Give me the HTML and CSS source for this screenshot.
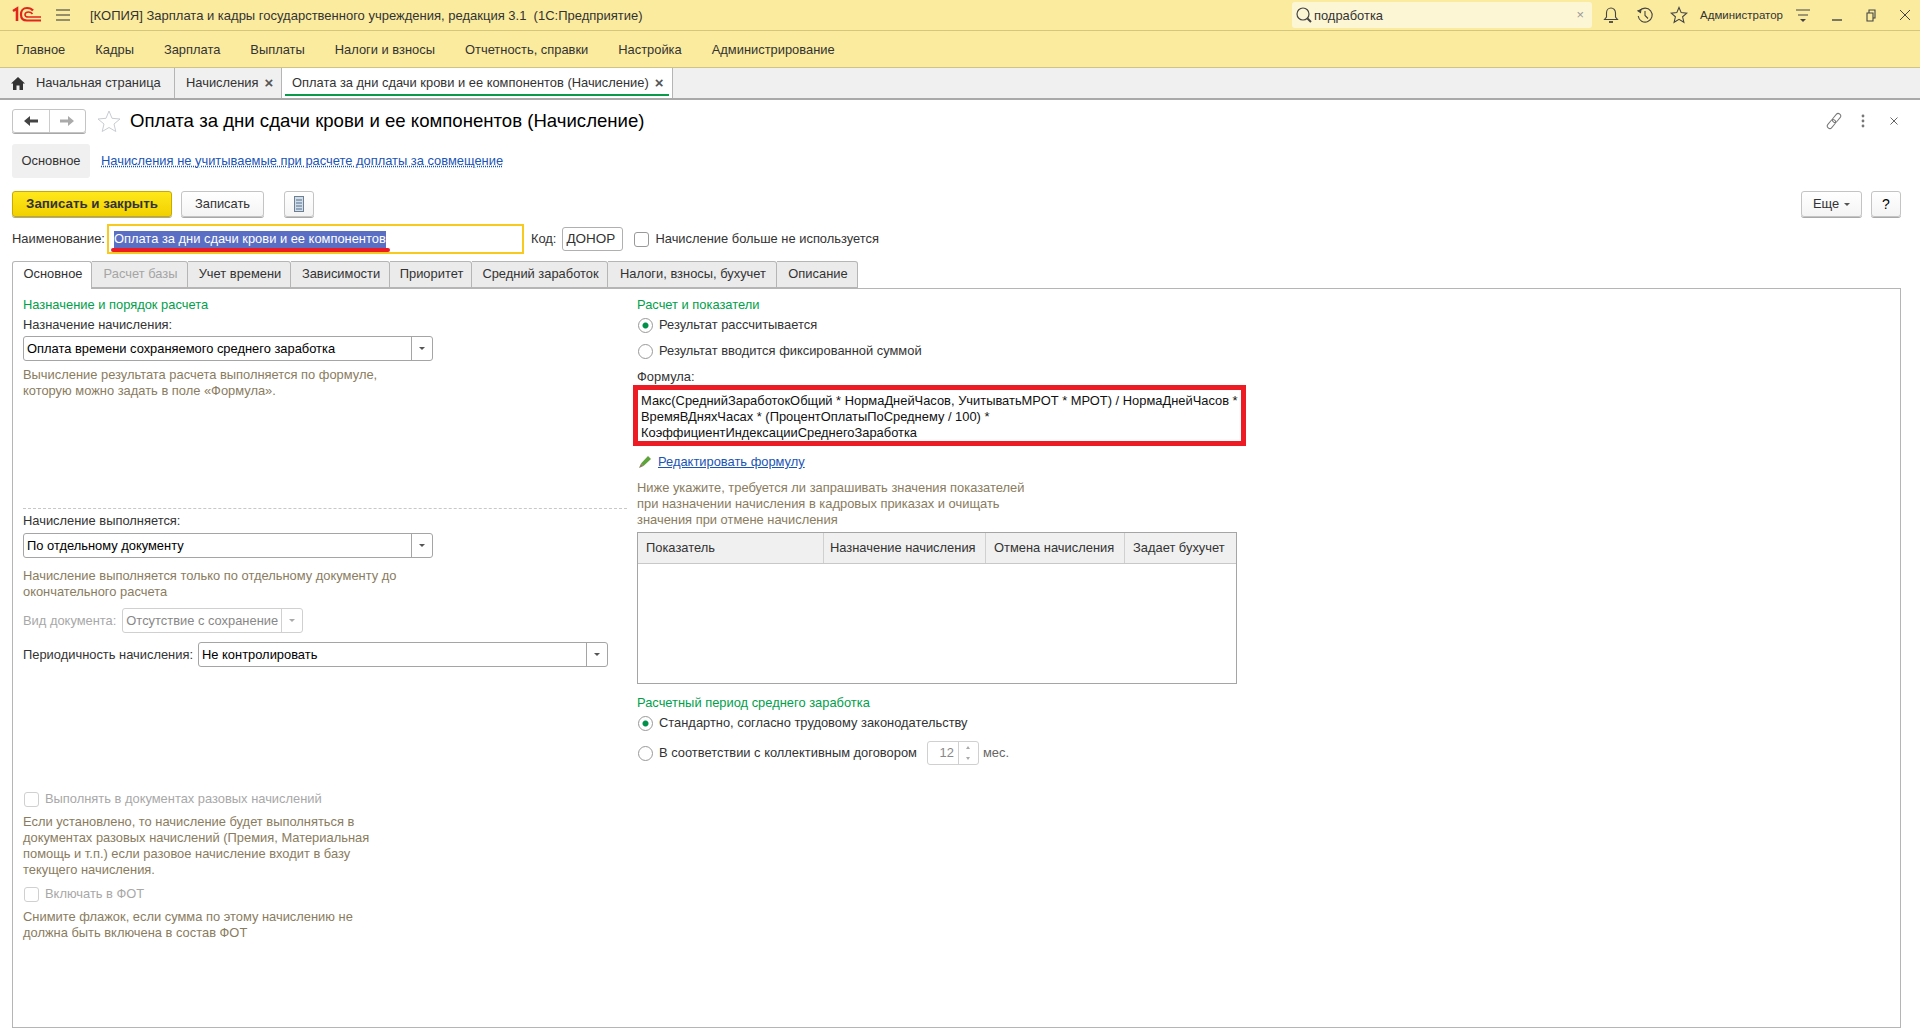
FILE: index.html
```html
<!DOCTYPE html>
<html lang="ru">
<head>
    <meta charset="UTF-8">
    <meta name="viewport" content="width=device-width, initial-scale=1.0">
    <title>Оплата за дни сдачи крови и ее компонентов</title>
    <link rel="stylesheet" href="styles.css">
</head>
<body>
    <div class="titlebar">
        <svg class="logo" width="30" height="18" viewBox="0 0 30 18" fill="none" stroke="#e1251b">
            <path d="M1 5 L5 2.5 V15" stroke-width="2.6"/>
            <path d="M21 4.5 C19.5 2.5 17 2 15 2 C11 2 9 5 9 8.5 C9 12 11 14.5 15 14.5 H29" stroke-width="2.2"/>
            <path d="M20.5 8 C19.5 6.5 18 6 16.5 6 C14 6 13 7.5 13 8.7 C13 10 14 11 16.5 11 H29" stroke-width="1.6"/>
        </svg>
        <svg class="burger" width="16" height="14" viewBox="0 0 16 14" stroke="#333" stroke-width="1.2">
            <path d="M1 2 H15 M1 7 H15 M1 12 H15"/>
        </svg>
        <div class="app-title">[КОПИЯ] Зарплата и кадры государственного учреждения, редакция 3.1&nbsp; (1С:Предприятие)</div>
        <div class="search">
            <svg width="18" height="18" viewBox="0 0 18 18" fill="none" stroke="#444" stroke-width="1.2">
                <circle cx="8" cy="8" r="6"/>
                <path d="M12.5 12.5 L16 16" stroke-width="2"/>
            </svg>
            <span class="search-text">подработка</span>
            <span class="search-x">×</span>
        </div>
        <div class="top-icons">
            <svg width="18" height="18" viewBox="0 0 18 18" fill="none" stroke="#444" stroke-width="1.1">
                <path d="M2.5 13.5 H15.5 L13.5 11 V7 C13.5 4 11.5 2 9 2 C6.5 2 4.5 4 4.5 7 V11 Z"/>
                <path d="M7 16 H11" stroke-width="1.8"/>
            </svg>
            <svg width="18" height="18" viewBox="0 0 18 18" fill="none" stroke="#444" stroke-width="1.1">
                <path d="M3.5 5 A7 7 0 1 1 2.2 10"/>
                <path d="M1.5 4.5 L4.5 6.5 L5 3" fill="#444"/>
                <path d="M9 5 V9.5 L12 12.5"/>
            </svg>
            <svg width="18" height="18" viewBox="0 0 18 18" fill="none" stroke="#444" stroke-width="1.1">
                <path d="M9 1.5 L11.2 6.6 L16.8 7.1 L12.6 10.8 L13.9 16.3 L9 13.4 L4.1 16.3 L5.4 10.8 L1.2 7.1 L6.8 6.6 Z"/>
            </svg>
        </div>
        <div class="user">Администратор</div>
        <div class="win-icons">
            <svg width="16" height="16" viewBox="0 0 16 16" fill="none" stroke="#444" stroke-width="1.1">
                <path d="M1 3 H15 M3 8 H13"/>
                <path d="M5 12 H11 L8 15 Z" fill="#444" stroke="none"/>
            </svg>
            <svg width="16" height="16" viewBox="0 0 16 16" fill="none" stroke="#444" stroke-width="1.4">
                <path d="M3 13 H13"/>
            </svg>
            <svg width="16" height="16" viewBox="0 0 16 16" fill="none" stroke="#444" stroke-width="1.1">
                <path d="M4 6 H10 V14 H4 Z M6 6 V3 H12 V11 H10"/>
            </svg>
            <svg width="16" height="16" viewBox="0 0 16 16" fill="none" stroke="#444" stroke-width="1">
                <path d="M3 3 L13 13 M13 3 L3 13"/>
            </svg>
        </div>
    </div>

    <div class="menubar">
        <span>Главное</span>
        <span>Кадры</span>
        <span>Зарплата</span>
        <span>Выплаты</span>
        <span>Налоги и взносы</span>
        <span>Отчетность, справки</span>
        <span>Настройка</span>
        <span>Администрирование</span>
    </div>

    <div class="tabbar">
        <div class="tab tab-home">
            <svg width="14" height="13" viewBox="0 0 14 13" fill="#333">
                <path d="M7 0 L14 6.5 H12 V13 H8.5 V8.5 H5.5 V13 H2 V6.5 H0 Z"/>
            </svg>
            Начальная страница
        </div>
        <div class="tab tab-list">Начисления <span class="tab-x">×</span></div>
        <div class="tab tab-active">
            <div class="tab-active-inner">Оплата за дни сдачи крови и ее компонентов (Начисление)<span class="tab-x">×</span></div>
        </div>
    </div>

    <div class="form">
        <div class="form-head">
            <div class="nav-group">
                <div class="nav-btn">
                    <svg width="14" height="12" viewBox="0 0 14 12" fill="#444"><path d="M0 6 L6 1 V4.5 H14 V7.5 H6 V11 Z"/></svg>
                </div>
                <div class="nav-btn">
                    <svg width="14" height="12" viewBox="0 0 14 12" fill="#aaa"><path d="M14 6 L8 1 V4.5 H0 V7.5 H8 V11 Z"/></svg>
                </div>
            </div>
            <svg class="fav" width="24" height="22" viewBox="0 0 24 22" fill="none" stroke="#c8ccd0" stroke-width="1">
                <path d="M12 1 L15 8.3 L23 9 L17 14 L18.8 21.5 L12 17.5 L5.2 21.5 L7 14 L1 9 L9 8.3 Z"/>
            </svg>
            <h1 class="form-title">Оплата за дни сдачи крови и ее компонентов (Начисление)</h1>
            <div class="head-tools">
                <svg width="18" height="18" viewBox="0 0 18 18" fill="none" stroke="#777" stroke-width="1">
                    <g transform="rotate(-50 9 9)">
                        <rect x="0" y="6.5" width="10" height="5" rx="2.5"/>
                        <rect x="8" y="6.5" width="10" height="5" rx="2.5"/>
                    </g>
                </svg>
                <svg width="6" height="14" viewBox="0 0 6 14" fill="#777">
                    <circle cx="3" cy="2" r="1.4"/><circle cx="3" cy="7" r="1.4"/><circle cx="3" cy="12" r="1.4"/>
                </svg>
                <svg class="head-close" width="10" height="10" viewBox="0 0 10 10" stroke="#666" stroke-width="1">
                    <path d="M1.5 1.5 L8.5 8.5 M8.5 1.5 L1.5 8.5"/>
                </svg>
            </div>
        </div>

        <div class="sections">
            <div class="section-btn">Основное</div>
            <a class="section-link">Начисления не учитываемые при расчете доплаты за совмещение</a>
        </div>

        <div class="commands">
            <div class="btn btn-primary">Записать и закрыть</div>
            <div class="btn btn-save">Записать</div>
            <div class="btn btn-icon">
                <svg width="10" height="16" viewBox="0 0 10 16">
                    <rect x="0.5" y="0.5" width="9" height="15" fill="#d4dce6" stroke="#6b7f95"/>
                    <path d="M2 4 H8 M2 7 H8 M2 10 H8 M2 13 H8" stroke="#4f6f92" stroke-width="1.2"/>
                </svg>
            </div>
            <div class="commands-right">
                <div class="btn btn-more">Еще <span class="caret"></span></div>
                <div class="btn btn-help">?</div>
            </div>
        </div>

        <div class="name-row">
            <label>Наименование:</label>
            <div class="name-field">
                <span class="selected">Оплата за дни сдачи крови и ее компонентов</span>
                <span class="red-mark"></span>
            </div>
            <label class="code-label">Код:</label>
            <div class="code-field">ДОНОР</div>
            <span class="check"></span>
            <span class="check-text">Начисление больше не используется</span>
        </div>

        <div class="tabs">
            <div class="ftab ftab-active">Основное</div>
            <div class="ftab ftab-off w-base">Расчет базы</div>
            <div class="ftab w-time">Учет времени</div>
            <div class="ftab w-dep">Зависимости</div>
            <div class="ftab w-prio">Приоритет</div>
            <div class="ftab w-avg">Средний заработок</div>
            <div class="ftab w-tax">Налоги, взносы, бухучет</div>
            <div class="ftab w-desc">Описание</div>
        </div>

        <div class="panel">
            <div class="col-left">
                <div class="group-title">Назначение и порядок расчета</div>
                <div class="label mt4">Назначение начисления:</div>
                <div class="select select-wide mt3">
                    <span class="select-value">Оплата времени сохраняемого среднего заработка</span>
                    <span class="select-btn"><span class="caret"></span></span>
                </div>
                <div class="hint hint-first">Вычисление результата расчета выполняется по формуле,<br>которую можно задать в поле «Формула».</div>
                <div class="dashed"></div>
                <div class="label mt4">Начисление выполняется:</div>
                <div class="select select-wide mt4">
                    <span class="select-value">По отдельному документу</span>
                    <span class="select-btn"><span class="caret"></span></span>
                </div>
                <div class="hint hint-second">Начисление выполняется только по отдельному документу до<br>окончательного расчета</div>
                <div class="field-row row-doc">
                    <span class="label-off">Вид документа:</span>
                    <div class="select select-doc">
                        <span class="select-value">Отсутствие с сохранение</span>
                        <span class="select-btn"><span class="caret"></span></span>
                    </div>
                </div>
                <div class="field-row row-period">
                    <span class="label">Периодичность начисления:</span>
                    <div class="select select-period">
                        <span class="select-value">Не контролировать</span>
                        <span class="select-btn"><span class="caret"></span></span>
                    </div>
                </div>
                <div class="check-row row-once">
                    <span class="check check-off"></span>
                    <span class="label-off">Выполнять в документах разовых начислений</span>
                </div>
                <div class="hint hint-once">Если установлено, то начисление будет выполняться в<br>документах разовых начислений (Премия, Материальная<br>помощь и т.п.) если разовое начисление входит в базу<br>текущего начисления.</div>
                <div class="check-row row-fot">
                    <span class="check check-off"></span>
                    <span class="label-off">Включать в ФОТ</span>
                </div>
                <div class="hint hint-fot">Снимите флажок, если сумма по этому начислению не<br>должна быть включена в состав ФОТ</div>
            </div>

            <div class="col-right">
                <div class="group-title">Расчет и показатели</div>
                <div class="radio-row mt4"><span class="radio radio-on"></span>Результат рассчитывается</div>
                <div class="radio-row mt10"><span class="radio"></span>Результат вводится фиксированной суммой</div>
                <div class="label mt10">Формула:</div>
                <div class="formula">Макс(СреднийЗаработокОбщий * НормаДнейЧасов, УчитыватьМРОТ * МРОТ) / НормаДнейЧасов *<br>ВремяВДняхЧасах * (ПроцентОплатыПоСреднему / 100) *<br>КоэффициентИндексацииСреднегоЗаработка</div>
                <div class="edit-row">
                    <svg width="14" height="14" viewBox="0 0 14 14">
                        <path d="M3 8.5 L10 1 L13 4 L5.5 11 Z" fill="#5da33a"/>
                        <path d="M3 8.5 L5.5 11 L1 13 Z" fill="#8a7a5a"/>
                    </svg>
                    <a class="edit-link">Редактировать формулу</a>
                </div>
                <div class="hint hint-table">Ниже укажите, требуется ли запрашивать значения показателей<br>при назначении начисления в кадровых приказах и очищать<br>значения при отмене начисления</div>
                <div class="table">
                    <div class="table-head">
                        <div class="th th-name">Показатель</div>
                        <div class="th th-set">Назначение начисления</div>
                        <div class="th th-cancel">Отмена начисления</div>
                        <div class="th th-acc">Задает бухучет</div>
                    </div>
                </div>
                <div class="group-title mt11">Расчетный период среднего заработка</div>
                <div class="radio-row mt4"><span class="radio radio-on"></span>Стандартно, согласно трудовому законодательству</div>
                <div class="radio-row row-spin">
                    <span class="radio"></span>В соответствии с коллективным договором
                    <div class="spin">
                        <span class="spin-value">12</span>
                        <span class="spin-btns">
                            <span class="spin-up"></span>
                            <span class="spin-down"></span>
                        </span>
                    </div>
                    <span class="spin-unit">мес.</span>
                </div>
            </div>
        </div>
    </div>
</body>
</html>
```

FILE: styles.css
```css
* {
    box-sizing: border-box;
}
body {
    margin: 0;
    width: 1920px;
    height: 1036px;
    overflow: hidden;
    background-color: #ffffff;
    color: #333333;
    font-family: "Liberation Sans", Arial, sans-serif;
    font-size: 12.9px;
    line-height: 16px;
}

/* top bars */
.titlebar {
    height: 31px;
    display: flex;
    align-items: center;
    background-color: #fbeb9e;
    border-bottom: 1px solid #d6c67c;
}
.logo {
    margin-left: 12px;
}
.burger {
    margin-left: 13px;
}
.app-title {
    margin-left: 19px;
    padding-top: 2px;
    width: 1202px;
    font-size: 13px;
    white-space: nowrap;
}
.search {
    width: 300px;
    height: 26px;
    display: flex;
    align-items: center;
    padding-left: 3px;
    background-color: #fdf6d5;
    border-radius: 3px;
}
.search-text {
    margin-left: 1px;
    padding-top: 2px;
    color: #333333;
}
.search-x {
    margin-left: auto;
    margin-right: 8px;
    color: #999999;
}
.top-icons {
    display: flex;
    gap: 16px;
    margin-left: 10px;
}
.user {
    margin-left: 12px;
    width: 92px;
    font-size: 11.5px;
    white-space: nowrap;
}
.win-icons {
    display: flex;
    gap: 18px;
    margin-left: 3px;
}
.menubar {
    height: 37px;
    display: flex;
    align-items: center;
    gap: 30px;
    padding: 2px 0 0 16px;
    background-color: #fbeb9e;
    border-bottom: 1px solid #cfc388;
}
.tabbar {
    height: 32px;
    display: flex;
    background-color: #f0f0f0;
    border-bottom: 2px solid #a9a9a9;
}
.tab {
    display: flex;
    align-items: center;
    white-space: nowrap;
    border-right: 1px solid #b5b5b5;
}
.tab-home {
    width: 175px;
    padding-left: 11px;
    gap: 11px;
}
.tab-list {
    width: 107px;
    padding-left: 11px;
}
.tab-active {
    width: 391px;
    padding: 0 3px 2px;
    background-color: #ffffff;
}
.tab-active-inner {
    flex: 1;
    height: 100%;
    display: flex;
    align-items: center;
    padding: 4px 0 0 7px;
    border-bottom: 2px solid #0a9a4a;
}
.tab-x {
    margin-left: 6px;
    color: #555555;
    font-size: 15px;
    font-weight: bold;
}

/* form head */
.form {
    padding: 9px 19px 0 12px;
}
.form-head {
    height: 24px;
    display: flex;
    align-items: center;
}
.nav-group {
    width: 74px;
    height: 24px;
    display: flex;
    border: 1px solid #c4c4c4;
    border-radius: 3px;
    box-shadow: 0 1px 0 #a8a8a8;
}
.nav-btn {
    flex: 1;
    display: flex;
    align-items: center;
    justify-content: center;
}
.nav-btn + .nav-btn {
    border-left: 1px solid #cccccc;
}
.fav {
    margin-left: 11px;
}
.form-title {
    margin: 0 0 0 9px;
    font-size: 18.6px;
    font-weight: normal;
    color: #000000;
}
.head-tools {
    margin-left: auto;
    display: flex;
    align-items: center;
    gap: 17px;
    margin-right: 2px;
}
.head-close {
    margin-left: 6px;
}
.sections {
    margin-top: 11px;
    height: 34px;
    display: flex;
    align-items: center;
}
.section-btn {
    width: 78px;
    height: 34px;
    line-height: 34px;
    text-align: center;
    background-color: #f0f0f0;
    border-radius: 3px;
}
.section-link {
    margin-left: 11px;
    color: #1a55b5;
    text-decoration: underline dotted;
}
.commands {
    margin-top: 13px;
    height: 26px;
    display: flex;
}
.btn {
    height: 26px;
    display: flex;
    align-items: center;
    justify-content: center;
    border: 1px solid #c4c4c4;
    border-radius: 3px;
    background: linear-gradient(#ffffff, #f4f4f4);
    box-shadow: 0 1px 0 #a8a8a8;
}
.btn-primary {
    width: 160px;
    font-size: 13.3px;
    font-weight: bold;
    background: linear-gradient(#ffe81a, #f2d000);
    border-color: #c8aa00;
}
.btn-save {
    width: 83px;
    margin-left: 9px;
}
.btn-icon {
    width: 30px;
    margin-left: 20px;
}
.commands-right {
    margin-left: auto;
    display: flex;
    gap: 9px;
}
.btn-more {
    width: 61px;
    gap: 5px;
}
.btn-help {
    width: 30px;
    font-size: 14px;
    color: #000000;
}
.caret {
    display: inline-block;
    border-top: 3px solid #555555;
    border-left: 3px solid transparent;
    border-right: 3px solid transparent;
}

/* name row */
.name-row {
    margin-top: 7px;
    height: 30px;
    display: flex;
    align-items: center;
}
.name-field {
    position: relative;
    width: 417px;
    height: 30px;
    margin-left: 2px;
    padding: 5px 0 0 5px;
    border: 2px solid #f8c91f;
}
.selected {
    display: inline-block;
    height: 17px;
    background-color: #5a6fc4;
    color: #ffffff;
}
.red-mark {
    position: absolute;
    left: 2px;
    top: 22px;
    width: 279px;
    height: 4px;
    border-radius: 2px;
    background-color: #ed1c24;
}
.code-label {
    margin-left: 7px;
}
.code-field {
    width: 61px;
    height: 24px;
    line-height: 22px;
    margin-left: 6px;
    padding-left: 3px;
    font-size: 13.5px;
    border: 1px solid #b0b0b0;
    border-radius: 3px;
}
.check {
    display: inline-block;
    flex: none;
    width: 15px;
    height: 15px;
    border: 1px solid #999999;
    border-radius: 3px;
}
.name-row .check {
    margin-left: 11px;
}
.check-text {
    margin-left: 6px;
}

/* form tabs */
.tabs {
    margin-top: 7px;
    height: 28px;
    display: flex;
    position: relative;
    z-index: 1;
}
.ftab {
    height: 27px;
    line-height: 24px;
    padding-left: 2px;
    text-align: center;
    white-space: nowrap;
    background-color: #ebebeb;
    border: 1px solid #b5b5b5;
    border-left: 0;
    border-radius: 0 3px 0 0;
}
.ftab-active {
    width: 80px;
    height: 28px;
    background-color: #ffffff;
    border-left: 1px solid #b5b5b5;
    border-bottom: 0;
    border-radius: 3px 3px 0 0;
}
.ftab-off {
    color: #a5a5a5;
}
.w-base { width: 96px; }
.w-time { width: 103px; }
.w-dep { width: 99px; }
.w-prio { width: 82px; }
.w-avg { width: 136px; }
.w-tax { width: 169px; }
.w-desc { width: 81px; }

/* panel */
.panel {
    margin-top: -1px;
    height: 740px;
    display: flex;
    border: 1px solid #b5b5b5;
    padding: 8px 0 0 10px;
}
.col-left {
    width: 604px;
}
.col-right {
    margin-left: 10px;
    width: 620px;
}
.group-title {
    color: #00a04a;
}
.label {
    color: #333333;
    white-space: nowrap;
}
.label-off {
    color: #a8a8a8;
    white-space: nowrap;
}
.mt3 { margin-top: 3px; }
.mt4 { margin-top: 4px; }
.mt10 { margin-top: 10px; }
.mt11 { margin-top: 11px; }
.select {
    height: 25px;
    display: flex;
    align-items: center;
    border: 1px solid #a5a5a5;
    border-radius: 3px;
    color: #000000;
}
.select-wide {
    width: 410px;
}
.select-value {
    flex: 1;
    padding-left: 3px;
    white-space: nowrap;
}
.select-btn {
    width: 21px;
    height: 100%;
    display: flex;
    align-items: center;
    justify-content: center;
    border-left: 1px solid #a5a5a5;
}
.hint {
    color: #8a7c5e;
    white-space: nowrap;
}
.hint-first { margin-top: 6px; }
.hint-second { margin-top: 10px; }
.hint-once { margin-top: 7px; }
.hint-fot { margin-top: 7px; }
.hint-table { margin-top: 10px; }
.dashed {
    margin-top: 109px;
    border-top: 1px dashed #c8c8c8;
}
.field-row {
    display: flex;
    align-items: center;
    height: 25px;
}
.row-doc { margin-top: 8px; }
.row-period { margin-top: 9px; }
.select-doc {
    margin-left: 6px;
    width: 181px;
    border-color: #d0d0d0;
    color: #888888;
}
.select-doc .select-value {
    overflow: hidden;
}
.select-doc .select-btn {
    flex: none;
    border-color: #d0d0d0;
}
.select-doc .caret {
    border-top-color: #aaaaaa;
}
.select-period {
    margin-left: 5px;
    width: 410px;
}
.check-row {
    display: flex;
    align-items: center;
    gap: 6px;
    padding-left: 1px;
}
.row-once { margin-top: 124px; }
.row-fot { margin-top: 8px; }
.check-off {
    border-color: #d0d0d0;
}

/* right column */
.radio-row {
    display: flex;
    align-items: center;
    gap: 6px;
    padding-left: 1px;
    white-space: nowrap;
}
.radio {
    flex: none;
    width: 15px;
    height: 15px;
    border: 1px solid #999999;
    border-radius: 50%;
}
.radio-on {
    background: radial-gradient(circle, #00904a 0, #00904a 2.5px, #ffffff 3.5px);
}
.formula {
    margin: 0 0 0 -4px;
    width: 613px;
    height: 61px;
    padding: 3px 0 0 3px;
    border: 5px solid #ed1c24;
    color: #111111;
    white-space: nowrap;
}
.edit-row {
    margin-top: 8px;
    display: flex;
    align-items: center;
    gap: 6px;
    padding-left: 1px;
}
.edit-link {
    color: #1a55b5;
    text-decoration: underline;
}
.table {
    margin-top: 4px;
    width: 600px;
    height: 152px;
    border: 1px solid #a5a5a5;
}
.table-head {
    display: flex;
    height: 31px;
    background-color: #f0f0f0;
    border-bottom: 1px solid #c8c8c8;
}
.th {
    line-height: 30px;
    padding-left: 8px;
    border-right: 1px solid #d0d0d0;
    white-space: nowrap;
}
.th-name { width: 186px; }
.th-set { width: 162px; padding-left: 6px; }
.th-cancel { width: 139px; }
.th-acc {
    flex: 1;
    border-right: 0;
}
.row-spin {
    margin-top: 10px;
    height: 24px;
}
.spin {
    margin-left: 4px;
    width: 52px;
    height: 24px;
    display: flex;
    border: 1px solid #d0d0d0;
    border-radius: 3px;
}
.spin-value {
    width: 30px;
    line-height: 22px;
    text-align: right;
    padding-right: 4px;
    color: #888888;
}
.spin-btns {
    flex: 1;
    display: flex;
    flex-direction: column;
    align-items: center;
    justify-content: space-around;
    border-left: 1px solid #d0d0d0;
}
.spin-up {
    border-bottom: 3px solid #aaaaaa;
    border-left: 2px solid transparent;
    border-right: 2px solid transparent;
}
.spin-down {
    border-top: 3px solid #aaaaaa;
    border-left: 2px solid transparent;
    border-right: 2px solid transparent;
}
.spin-unit {
    margin-left: -2px;
    color: #666666;
}
```
